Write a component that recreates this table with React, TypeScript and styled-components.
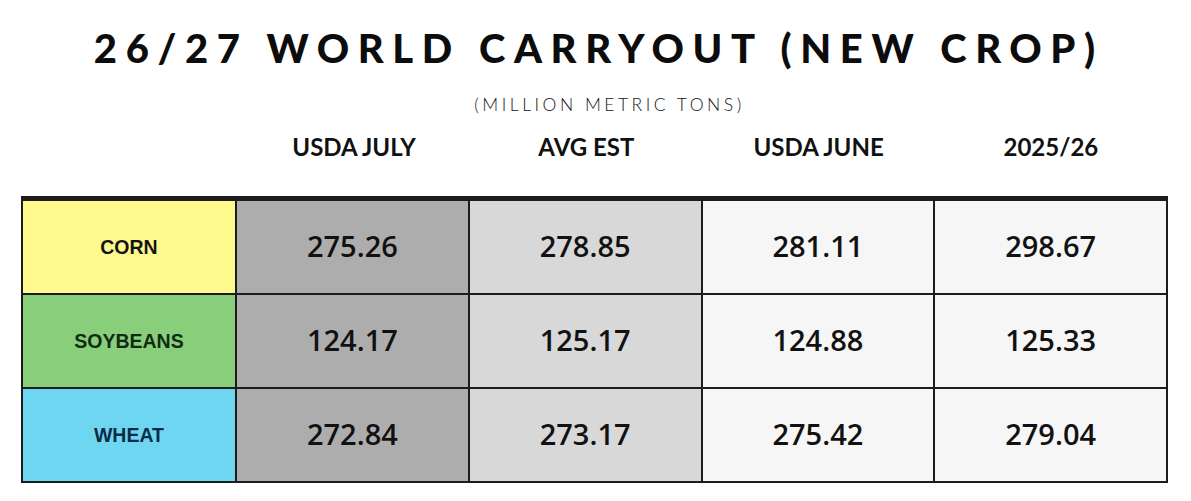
import React from 'react';
import styled, { createGlobalStyle } from 'styled-components';

interface Row {
  crop: string;
  tone: 'corn' | 'soy' | 'wheat';
  values: string[];
}

const columns = ['USDA JULY', 'AVG EST', 'USDA JUNE', '2025/26'];

const rows: Row[] = [
  { crop: 'CORN', tone: 'corn', values: ['275.26', '278.85', '281.11', '298.67'] },
  { crop: 'SOYBEANS', tone: 'soy', values: ['124.17', '125.17', '124.88', '125.33'] },
  { crop: 'WHEAT', tone: 'wheat', values: ['272.84', '273.17', '275.42', '279.04'] }
];

const cropColors = {
  corn: { bg: '#fdf98d', fg: '#141414' },
  soy: { bg: '#89cf7b', fg: '#0f2b12' },
  wheat: { bg: '#6fd6f2', fg: '#0b2c47' }
};

const valueShades = ['#adadad', '#d8d8d8', '#f6f6f6', '#f6f6f6'];

const App: React.FC = () => (
  <>
    <GlobalStyle />
    <Page>
      <Title>26/27 WORLD CARRYOUT (NEW CROP)</Title>
      <Subtitle>(MILLION METRIC TONS)</Subtitle>
      <HeaderRow>
        <span />
        {columns.map((c) => (
          <HeaderLabel key={c}>{c}</HeaderLabel>
        ))}
      </HeaderRow>
      <Table>
        {rows.map((r) => (
          <React.Fragment key={r.crop}>
            <CropCell $tone={r.tone}>{r.crop}</CropCell>
            {r.values.map((v, i) => (
              <ValueCell key={i} $shade={valueShades[i]}>
                {v}
              </ValueCell>
            ))}
          </React.Fragment>
        ))}
      </Table>
    </Page>
  </>
);

export default App;

const GlobalStyle = createGlobalStyle`
  html, body {
    margin: 0;
    padding: 0;
    background: #ffffff;
  }
`;

const Page = styled.div`
  width: 1191px;
  height: 501px;
  overflow: hidden;
  padding: 0 23px 0 21px;
  box-sizing: border-box;
  display: flex;
  flex-direction: column;
`;

const Title = styled.h1`
  margin: 24px 0 0 0;
  text-align: center;
  white-space: nowrap;
  font-family: Lato, 'Liberation Sans', sans-serif;
  font-weight: 900;
  font-size: 40px;
  line-height: 48px;
  letter-spacing: 8.6px;
  padding-left: 8.6px;
  color: #0c0c0c;
`;

const Subtitle = styled.div`
  margin-top: 22px;
  padding-left: 30px;
  text-align: center;
  font-family: Lato, 'Liberation Sans', sans-serif;
  font-weight: 300;
  font-size: 17.5px;
  line-height: 22px;
  letter-spacing: 0.2em;
  color: #151515;
`;

const HeaderRow = styled.div`
  margin-top: 17px;
  display: grid;
  grid-template-columns: 214px repeat(4, 1fr);
  column-gap: 2px;
  padding: 0 2px;
`;

const HeaderLabel = styled.div`
  text-align: center;
  font-family: Lato, 'Liberation Sans', sans-serif;
  font-weight: 700;
  font-size: 24px;
  line-height: 28px;
  color: #111;
`;

const Table = styled.div`
  margin-top: 35px;
  display: grid;
  grid-template-columns: 212px repeat(4, 1fr);
  grid-auto-rows: 92px;
  gap: 2px;
  background: #1c1c1c;
  border: 2px solid #1c1c1c;
  border-top-width: 5px;
`;

const CropCell = styled.div<{ $tone: Row['tone'] }>`
  display: flex;
  align-items: center;
  justify-content: center;
  background: ${(p) => cropColors[p.$tone].bg};
  color: ${(p) => cropColors[p.$tone].fg};
  font-family: 'Liberation Sans', Arial, sans-serif;
  font-weight: 700;
  font-size: 19.5px;
`;

const ValueCell = styled.div<{ $shade: string }>`
  display: flex;
  align-items: center;
  justify-content: center;
  background: ${(p) => p.$shade};
  color: #111;
  font-family: 'Open Sans', 'Noto Sans', sans-serif;
  font-weight: 600;
  font-size: 29px;
  padding-bottom: 4px;
`;
